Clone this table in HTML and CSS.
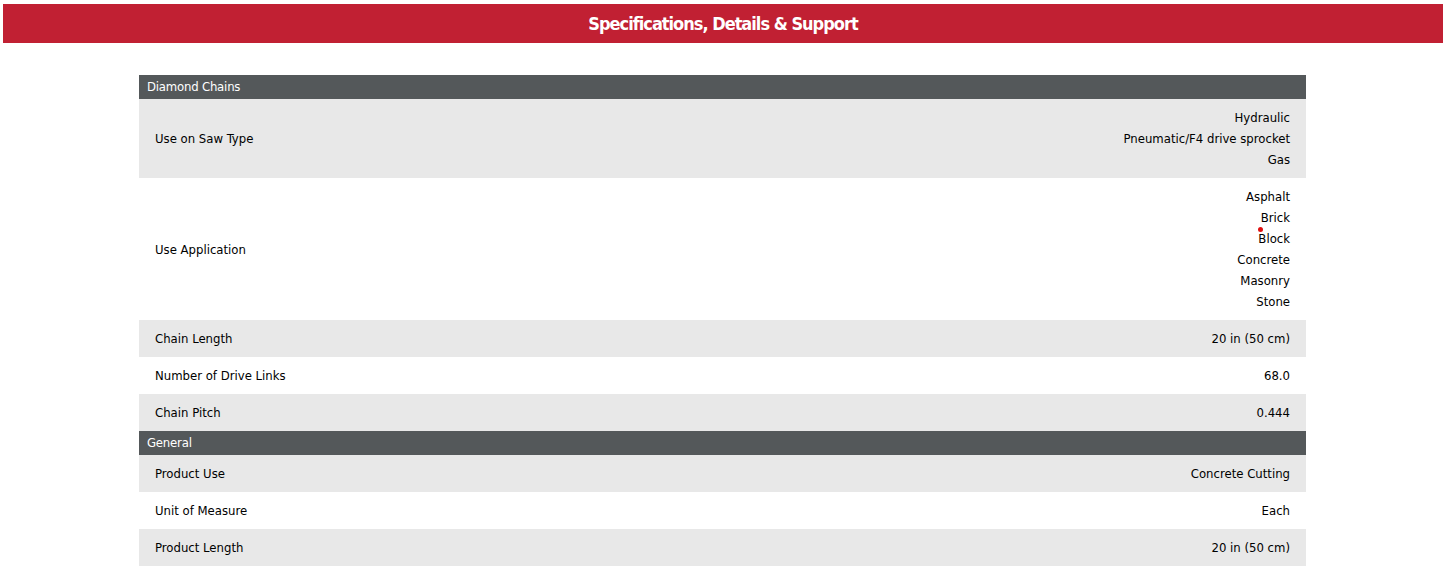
FILE: index.html
```html
<!DOCTYPE html>
<html>
<head>
<meta charset="utf-8">
<link rel="stylesheet" href="styles.css">
</head>
<body>
<div class="banner"><h1>Specifications, Details &amp; Support</h1></div>
<div class="specs">
  <div class="section">Diamond Chains</div>
  <div class="row alt"><div class="label">Use on Saw Type</div><div class="value"><span>Hydraulic</span><span>Pneumatic/F4 drive sprocket</span><span>Gas</span></div></div>
  <div class="row"><div class="label">Use Application</div><div class="value"><span>Asphalt</span><span>Brick</span><span class="marked">Block<i class="dot"></i></span><span>Concrete</span><span>Masonry</span><span>Stone</span></div></div>
  <div class="row alt"><div class="label">Chain Length</div><div class="value"><span>20 in (50 cm)</span></div></div>
  <div class="row"><div class="label">Number of Drive Links</div><div class="value"><span>68.0</span></div></div>
  <div class="row alt"><div class="label">Chain Pitch</div><div class="value"><span>0.444</span></div></div>
  <div class="section">General</div>
  <div class="row alt"><div class="label">Product Use</div><div class="value"><span>Concrete Cutting</span></div></div>
  <div class="row"><div class="label">Unit of Measure</div><div class="value"><span>Each</span></div></div>
  <div class="row alt"><div class="label">Product Length</div><div class="value"><span>20 in (50 cm)</span></div></div>
</div>
</body>
</html>
```

FILE: styles.css
```css
* { box-sizing: border-box; }
html, body { margin: 0; padding: 0; background: #fff; }
body {
  padding: 4px 4px 0 3px;
  font-family: "DejaVu Sans Condensed", "Liberation Sans", sans-serif;
  color: #000;
}
.banner {
  background: #c12033;
  height: 39px;
  display: flex;
  align-items: center;
  justify-content: center;
}
.banner h1 {
  margin: 0;
  color: #fff;
  font-size: 18px;
  font-weight: bold;
  letter-spacing: -1px;
}
.specs {
  width: 1167px;
  margin: 32px 0 0 136px;
  font-size: 13px;
}
.section {
  background: #54585a;
  color: #fff;
  height: 24px;
  line-height: 24px;
  padding-left: 8px;
  font-size: 13px;
  letter-spacing: -0.2px;
}
.row {
  display: flex;
  align-items: center;
  justify-content: space-between;
  padding: 8px 16px;
  background: #fff;
}
.row.alt { background: #e8e8e8; }
.label { line-height: 21px; }
.value {
  display: flex;
  flex-direction: column;
  align-items: flex-end;
  line-height: 21px;
}
.marked { position: relative; }
.dot {
  position: absolute;
  left: 0;
  top: -1px;
  width: 5px;
  height: 5px;
  border-radius: 50%;
  background: #e01010;
}
```
